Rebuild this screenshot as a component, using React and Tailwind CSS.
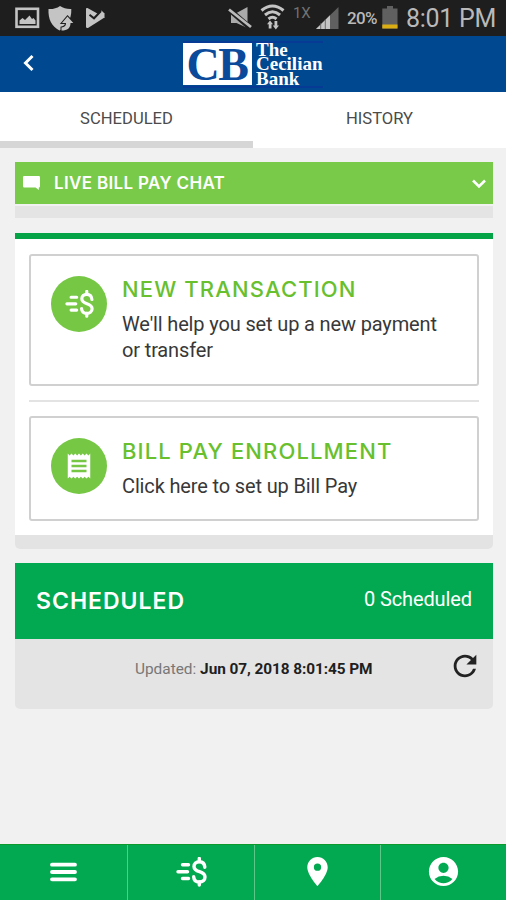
import React from 'react';
import { MdAccountCircle, MdPlace, MdReceipt, MdRefresh } from 'react-icons/md';

const MoneyIcon = ({ className }) => (
  <svg viewBox="0 0 31 30" className={className} fill="none" stroke="currentColor" strokeWidth="3.4" strokeLinecap="round">
    <path d="M6.5 7.8H12.5M2 14.8H11.5M6.5 21.5H12.5" />
    <path d="M23.3 1.5V4.5M23.3 25V28" />
    <path d="M28.8 10.2C28.6 6.5 26.4 4.7 23.3 4.7C20.2 4.7 18 6.5 18 9.4C18 16.4 29 13 29 20C29 23.2 26.6 25 23.3 25C20 25 17.9 23.1 17.7 19.8" />
  </svg>
);

const StatusBar = () => (
  <div className="flex h-9 bg-[#1e1e1e] font-[Roboto] text-[#b9b9b9]">
    <svg viewBox="0 0 110 36" className="h-9 w-[110px] shrink-0">
      <rect x="16.5" y="8.8" width="21.5" height="18" fill="none" stroke="#c4c4c4" strokeWidth="2.6" />
      <path d="M19.5 24V20.5L22.5 18L25 20L29.5 15.5L32 19L33.5 18L35.5 20.5V24Z" fill="#c4c4c4" />
      <path d="M60 6C56.5 8.5 52.5 9.3 48.5 9C48 19 51.5 26.5 59.5 30.5C66 27.5 71.8 20 71.3 9C67 9.2 63.3 8.3 60 6Z" fill="#c4c4c4" />
      <path
        d="M67.5 16.5L73.3 23H70.5C70.5 28 67.5 30.5 61.5 30.5V27.5C65 27 66 25.5 66 23H62Z"
        fill="#c4c4c4"
        stroke="#1e1e1e"
        strokeWidth="2"
        paintOrder="stroke"
      />
      <path d="M86 9Q86 7.5 87.5 8L104.5 17.5L88 28Q86 28.5 86 26.5Z" fill="#c4c4c4" />
      <path d="M97 15L101.5 10.5L104.5 13.5V18Z" fill="#c4c4c4" />
      <path d="M89.5 14.8L94 18.3L101 11" fill="none" stroke="#1e1e1e" strokeWidth="2" />
    </svg>
    <svg viewBox="225 0 62 36" className="ml-[115px] h-9 w-[62px] shrink-0">
      <path d="M231 13H236.5L247.5 7V28L236.5 23H231Z" fill="#aaa" />
      <path d="M228 8.5L251 28.5" stroke="#1e1e1e" strokeWidth="5.5" />
      <path d="M229 9.5L251 27" stroke="#bbb" strokeWidth="2.8" />
      <g fill="none" stroke="#c4c4c4" strokeWidth="3">
        <path d="M261.5 10.5Q272.5 1.5 283.5 10.5" />
        <path d="M265 15Q272.5 8.5 280 15" />
        <path d="M268.5 19Q272.5 15.5 276.5 19" />
      </g>
      <path d="M270 20.5L273 24.2H271.5V28.5H268.7V24.2H267ZM275.8 29.5L279 25.5H277.3V21H274.5V25.5H272.8Z" fill="#c4c4c4" />
    </svg>
    <span className="ml-[6px] mt-[5px] w-[23px] shrink-0 text-[15px] leading-4 tracking-[-0.3px] text-[#727272]">1X</span>
    <svg viewBox="316 0 23 36" className="h-9 w-[23px] shrink-0">
      <path d="M316 29L338.5 7V29Z" fill="#606060" />
      <path d="M316 29L330 15.3V29Z" fill="#c4c4c4" />
      <path d="M320.7 23V29M325.3 19V29" stroke="#555" strokeWidth=".8" />
    </svg>
    <span className="ml-[8px] mt-[8px] w-[34px] shrink-0 text-[17px] font-medium leading-5 tracking-[-0.6px]">20%</span>
    <svg viewBox="382 0 16 36" className="ml-[1px] h-9 w-[16px] shrink-0">
      <path d="M387 6H393V8.5H397.5V28.5H382.3V8.5H387Z" fill="#606060" />
      <path d="M382.3 24.5H397.5V28.5H382.3Z" fill="#dbae14" />
    </svg>
    <span className="ml-[8px] mt-[4px] whitespace-nowrap text-[25px] leading-[30px] tracking-[-0.3px]">8:01 PM</span>
  </div>
);

const Header = () => (
  <header className="flex h-14 items-start bg-[#00488f] text-white">
    <svg viewBox="0 0 12 18" className="ml-[22px] mt-[18px] h-[18px] w-3" fill="none" stroke="currentColor" strokeWidth="3">
      <path d="M10.5 2L3.5 9L10.5 16" />
    </svg>
    <div className="ml-[149px] mt-[5px] flex border-y-2 border-[#073a94] font-['Liberation_Serif'] font-bold">
      <div className="flex h-[42px] w-[69px] items-center justify-center bg-white text-[46px] leading-none tracking-[-1.5px] text-[#0b4a9b]">
        <span className="mr-[1px] mt-[1px]">CB</span>
      </div>
      <div className="ml-1 text-[19px] leading-[14.3px]">
        <div>The</div>
        <div>Cecilian</div>
        <div>Bank</div>
      </div>
    </div>
  </header>
);

const Tabs = () => (
  <div className="grid h-14 grid-cols-2 bg-white text-center text-[16.6px] leading-[53px] text-[#4b4b4b]">
    <div className="h-14 border-b-[7px] border-[#d6d6d6]">SCHEDULED</div>
    <div>HISTORY</div>
  </div>
);

const ActionCard = ({ icon, title, text, className }) => (
  <div className={`flex rounded-[3px] border-2 border-[#d0d0d0] pl-5 ${className}`}>
    <div className="mt-5 flex size-14 shrink-0 items-center justify-center rounded-full bg-[#75c744] text-white">{icon}</div>
    <div className="ml-[15px] mt-[19px]">
      <h2 className="whitespace-nowrap font-[Inter] text-[22px] font-medium leading-[28px] tracking-[1.13px] text-[#68c02f]">{title}</h2>
      <p className="mt-[8px] w-[330px] text-[20px] leading-[26px] tracking-[-0.14px] text-[#383838]">{text}</p>
    </div>
  </div>
);

const BottomNav = () => (
  <nav className="grid h-14 grid-cols-[128px_127px_126px_125px] divide-x divide-[#5cc788] border-t border-[#0b9a2b] bg-[#03a950] text-white *:flex *:items-center *:justify-center *:pb-[2px]">
    <div>
      <svg viewBox="0 0 27 20" className="h-5 w-[27px]" stroke="currentColor" strokeWidth="3.8" strokeLinecap="round">
        <path d="M2 2.7H25M2 10H25M2 17.3H25" />
      </svg>
    </div>
    <div><MoneyIcon className="h-[30px] w-[31px]" /></div>
    <div><MdPlace className="size-[35px]" /></div>
    <div><MdAccountCircle className="size-[35px]" /></div>
  </nav>
);

const App = () => {
  return (
    <div className="flex h-[900px] w-[506px] flex-col overflow-hidden bg-[#f1f1f1] font-[Roboto]">
      <StatusBar />
      <Header />
      <Tabs />
      <main className="flex-1 pl-[15px] pr-[13px] pt-[14px]">
        <div className="flex h-[42px] items-center bg-[#78ca48] text-white">
          <svg viewBox="0 0 17 14" className="ml-2 h-[14px] w-[17px]" fill="currentColor">
            <path d="M1.2 0H15.8Q17 0 17 1.2V10.3Q17 11.5 15.8 11.5V14L12.6 11.5H1.2Q0 11.5 0 10.3V1.2Q0 0 1.2 0Z" />
          </svg>
          <span className="ml-[14px] mt-[2px] flex-1 font-[Inter] text-[17px] font-semibold tracking-[0.34px]">LIVE BILL PAY CHAT</span>
          <svg viewBox="0 0 14 10" className="mr-[7px] mt-[2px] h-[10px] w-[14px]" fill="none" stroke="currentColor" strokeWidth="2.6">
            <path d="M1 1.5L7 7.5L13 1.5" />
          </svg>
        </div>
        <div className="mt-[2px] h-3 bg-[#e4e4e4]" />

        <section className="mt-[15px] h-[316px] rounded-b-[5px] border-b-[14px] border-t-[6px] border-b-[#e3e3e3] border-t-[#03a346] bg-white px-[14px] pt-[15px]">
          <ActionCard
            className="h-[132px]"
            icon={<MoneyIcon className="h-[28px] w-[29px]" />}
            title="NEW TRANSACTION"
            text="We'll help you set up a new payment or transfer"
          />
          <div className="mb-[14px] mt-[14px] h-[2px] bg-[#e3e3e3]" />
          <ActionCard
            className="h-[105px]"
            icon={<MdReceipt className="size-[30px]" />}
            title="BILL PAY ENROLLMENT"
            text="Click here to set up Bill Pay"
          />
        </section>

        <section className="mt-[14px] overflow-hidden rounded-b-[5px] bg-[#e4e4e4]">
          <div className="flex h-[76px] items-center justify-between bg-[#03a950] pl-[21px] pr-[21px] text-white">
            <h2 className="font-[Inter] text-[23px] font-semibold tracking-[1px]">SCHEDULED</h2>
            <span className="mb-[5px] text-[20px] tracking-[-0.1px]">0 Scheduled</span>
          </div>
          <div className="flex h-[70px] pl-[120px] text-[15.4px] text-[#777]">
            <div className="mt-[18px] flex-1 whitespace-nowrap leading-6">
              Updated: <b className="font-bold tracking-[-0.08px] text-[#1f1f1f]">Jun 07, 2018 8:01:45 PM</b>
            </div>
            <MdRefresh className="mr-[11px] mt-[10px] size-[34px] text-[#222]" />
          </div>
        </section>
      </main>
      <BottomNav />
    </div>
  );
};

export default App;
